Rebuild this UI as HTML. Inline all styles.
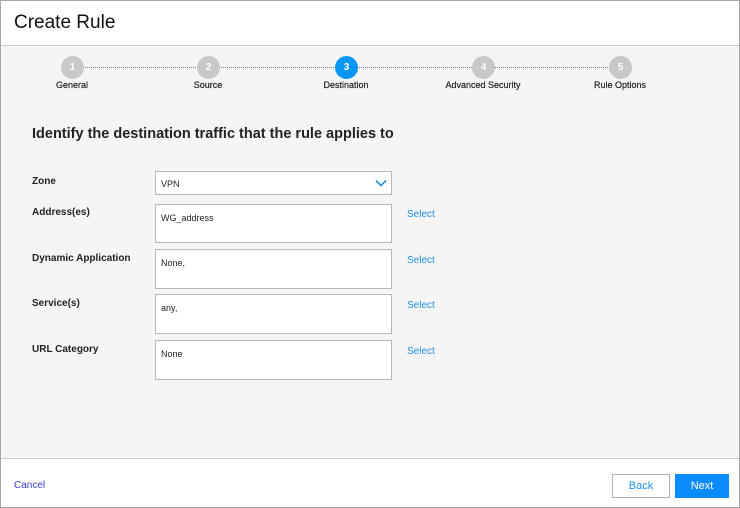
<!DOCTYPE html>
<html><head><style>
*{margin:0;padding:0;box-sizing:border-box}
body{width:740px;height:508px;font-family:"Liberation Sans",Arial,sans-serif;background:#fff;position:relative;overflow:hidden}
.frame{position:absolute;left:0;top:0;width:740px;height:508px;border:1px solid #a6a6a6}
.hdr{position:absolute;left:1px;top:1px;width:738px;height:45px;background:#fff;border-bottom:1px solid #c8c8c8}
.hdr h1{position:absolute;left:13px;top:11px;font-size:19px;font-weight:normal;color:#111}
.body{position:absolute;left:1px;top:46px;width:738px;height:413px;background:#f5f5f5;border-bottom:1px solid #c8c8c8}
.dots{position:absolute;top:67px;left:72px;width:548px;border-top:1px dotted #777}
.c{position:absolute;top:56px;width:23px;height:23px;border-radius:50%;background:#c8c8c8;color:#fff;font-size:10px;font-weight:bold;text-align:center;line-height:23px}
.c.a{background:#0a96f5}
.sl{position:absolute;top:80px;font-size:9px;color:#222;width:120px;text-align:center;-webkit-text-stroke:0.2px #222}
h2{position:absolute;left:32px;top:126px;font-size:14.5px;font-weight:bold;color:#222}
.lb{position:absolute;left:32px;font-size:10px;font-weight:bold;color:#222}
.bx{position:absolute;left:155px;width:237px;background:#fff;border:1px solid #b8b8b8;font-size:9px;color:#222;padding:8px 5px}
.sel{position:absolute;left:407px;font-size:10px;color:#1e90e8}
.btn{position:absolute;top:474px;height:24px;font-size:11px;text-align:center;line-height:22px}
</style></head><body>
<div class="hdr"><h1>Create Rule</h1></div>
<div class="body"></div>
<div class="dots"></div>
<div class="c" style="left:61px">1</div><div class="sl" style="left:12px">General</div>
<div class="c" style="left:197px">2</div><div class="sl" style="left:148px">Source</div>
<div class="c a" style="left:335px">3</div><div class="sl" style="left:286px">Destination</div>
<div class="c" style="left:472px">4</div><div class="sl" style="left:423px">Advanced Security</div>
<div class="c" style="left:609px">5</div><div class="sl" style="left:560px">Rule Options</div>
<h2>Identify the destination traffic that the rule applies to</h2>
<div class="lb" style="top:176px">Zone</div>
<div class="bx" style="top:171px;height:24px;padding:7px 5px">VPN
<svg style="position:absolute;right:4px;top:7px" width="12" height="8" viewBox="0 0 12 8"><path d="M1 1.5L6 6.5L11 1.5" fill="none" stroke="#1e90e8" stroke-width="1.6"/></svg></div>
<div class="lb" style="top:207px">Address(es)</div>
<div class="bx" style="top:204px;height:39px">WG_address</div><div class="sel" style="top:209px">Select</div>
<div class="lb" style="top:253px">Dynamic Application</div>
<div class="bx" style="top:249px;height:40px">None,</div><div class="sel" style="top:255px">Select</div>
<div class="lb" style="top:298px">Service(s)</div>
<div class="bx" style="top:294px;height:40px">any,</div><div class="sel" style="top:300px">Select</div>
<div class="lb" style="top:344px">URL Category</div>
<div class="bx" style="top:340px;height:40px">None</div><div class="sel" style="top:346px">Select</div>
<div style="position:absolute;left:14px;top:480px;font-size:10px;color:#3a3ad0">Cancel</div>
<div class="btn" style="left:612px;width:58px;border:1px solid #a8b4bf;background:#fff;color:#1e90e8">Back</div>
<div class="btn" style="left:675px;width:54px;background:#0a8cff;color:#fff;border:1px solid #0a8cff">Next</div>
<div class="frame"></div>
</body></html>
